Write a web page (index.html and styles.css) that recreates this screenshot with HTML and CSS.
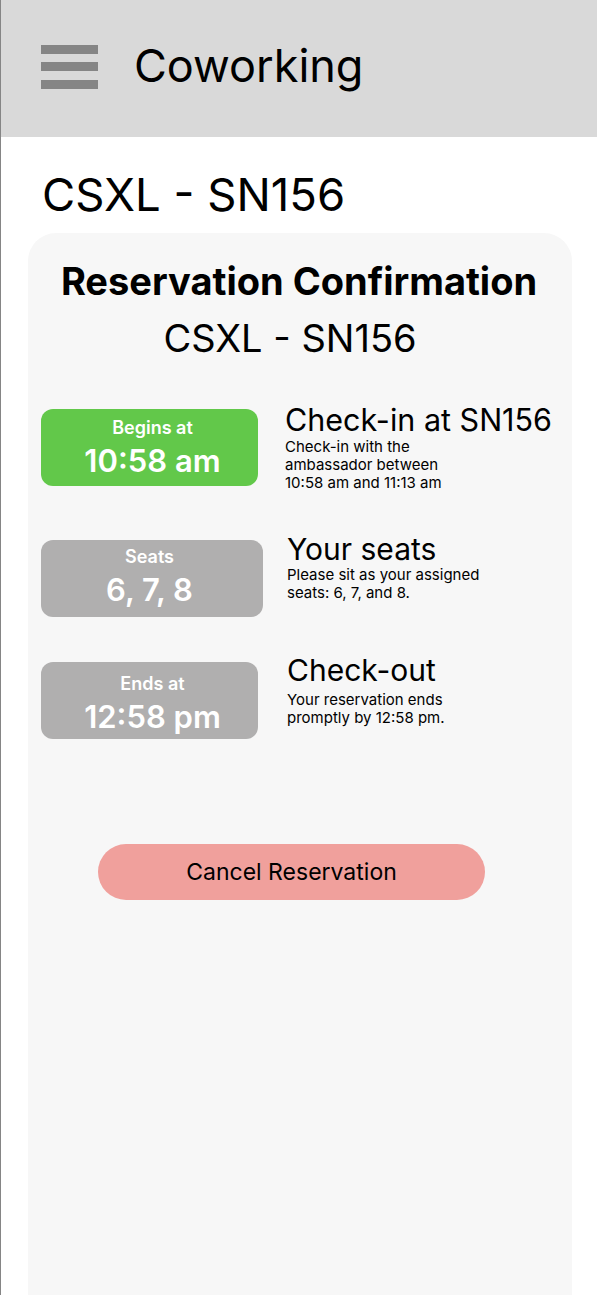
FILE: index.html
```html
<!DOCTYPE html>
<html lang="en">
<head>
<meta charset="utf-8">
<title>Coworking</title>
<link rel="stylesheet" href="styles.css">
</head>
<body>
<div class="app">
  <header class="topbar">
    <svg class="menu" width="57" height="44" viewBox="0 0 57 44" aria-hidden="true">
      <rect x="0" y="0" width="57" height="9" fill="#858585"/>
      <rect x="0" y="17" width="57" height="9" fill="#858585"/>
      <rect x="0" y="35" width="57" height="9" fill="#858585"/>
    </svg>
    <span class="brand">Coworking</span>
  </header>
  <main class="content">
    <h1 class="page-title">CSXL - SN156</h1>
    <section class="card">
      <h2 class="card-title">Reservation Confirmation</h2>
      <div class="card-sub">CSXL - SN156</div>
      <div class="rows">
        <div class="row row-start">
          <div class="badge badge-green">
            <span class="badge-label">Begins at</span>
            <span class="badge-value">10:58 am</span>
          </div>
          <div class="info">
            <div class="info-title">Check-in at SN156</div>
            <div class="info-text">Check-in with the<br>ambassador between<br>10:58 am and 11:13 am</div>
          </div>
        </div>
        <div class="row row-seats">
          <div class="badge badge-gray badge-wide">
            <span class="badge-label">Seats</span>
            <span class="badge-value">6, 7, 8</span>
          </div>
          <div class="info">
            <div class="info-title">Your seats</div>
            <div class="info-text">Please sit as your assigned<br>seats: 6, 7, and 8.</div>
          </div>
        </div>
        <div class="row row-end">
          <div class="badge badge-gray badge-end">
            <span class="badge-label">Ends at</span>
            <span class="badge-value">12:58 pm</span>
          </div>
          <div class="info">
            <div class="info-title">Check-out</div>
            <div class="info-text">Your reservation ends<br>promptly by 12:58 pm.</div>
          </div>
        </div>
      </div>
      <div class="actions">
        <button class="cancel" type="button">Cancel Reservation</button>
      </div>
    </section>
  </main>
</div>
</body>
</html>
```

FILE: styles.css
```css
html, body {
  margin: 0;
  padding: 0;
  background: #ffffff;
}

body {
  font-family: "Inter", "Liberation Sans", sans-serif;
  color: #000;
  overflow: hidden;
}

.app {
  border-left: 1px solid #858585;
  min-height: 1295px;
  box-sizing: border-box;
}

.topbar {
  height: 137px;
  background: #d9d9d9;
  display: flex;
  align-items: center;
  padding-left: 40px;
}

.menu {
  display: block;
  flex: none;
  margin-top: -3px;
}

.brand {
  margin-left: 36px;
  font-size: 45px;
  font-weight: 400;
  line-height: 1;
  margin-top: -6px;
}

.content {
  padding: 0 24px 0 27px;
}

.page-title {
  margin: 0;
  padding: 30px 0 0 14px;
  font-size: 45.5px;
  font-weight: 400;
  line-height: 56px;
  height: 66px;
}

.card {
  background: #f7f7f7;
  border-radius: 28px;
  width: 544px;
  min-height: 1100px;
  box-sizing: border-box;
  padding: 26px 0 0 0;
}

.card-title {
  margin: 0;
  text-align: center;
  font-family: "Inter", "Liberation Sans", sans-serif;
  font-weight: 700;
  font-size: 38px;
  line-height: 44px;
  padding-right: 2px;
}

.card-sub {
  text-align: center;
  font-family: "Inter", "Liberation Sans", sans-serif;
  font-size: 38px;
  line-height: 44px;
  margin-top: 13px;
  margin-left: -20px;
}

.rows {
  display: flex;
  flex-direction: column;
  margin-top: 49px;
  padding-left: 13px;
}

.row {
  display: flex;
  align-items: flex-start;
  height: 77px;
}

.row-seats {
  margin-top: 54px;
}

.row-end {
  margin-top: 45px;
}

.badge {
  width: 217px;
  height: 77px;
  border-radius: 12px;
  display: flex;
  flex-direction: column;
  align-items: center;
  justify-content: flex-start;
  color: #fff;
  flex: none;
  box-sizing: border-box;
  padding: 9px 0 0 6px;
}

.badge-wide {
  width: 222px;
  padding: 7px 5px 0 0;
}

.badge-end {
  padding-top: 12px;
}

.badge-green {
  background: #62c84a;
}

.badge-gray {
  background: #b0afaf;
}

.badge-label {
  font-size: 18px;
  font-weight: 600;
  line-height: 20px;
}

.badge-value {
  font-size: 31px;
  font-weight: 600;
  line-height: 38px;
  margin-top: 4px;
}

.info {
  margin-top: -7px;
}

.row-start .info {
  margin-left: 27px;
}

.row-seats .info {
  margin-left: 24px;
  margin-top: -9px;
}

.row-end .info {
  margin-left: 29px;
  margin-top: -10px;
}

.info-title {
  font-size: 30.5px;
  line-height: 36px;
  font-weight: 400;
}

.row-seats .info-title,
.row-end .info-title {
  font-size: 30px;
}

.row-seats .info-title {
  line-height: 34px;
  padding-top: 1px;
}

.info-text {
  font-size: 15px;
  line-height: 18px;
  font-weight: 400;
}

.row-end .info-text {
  margin-top: 3px;
}

.actions {
  display: flex;
  margin-top: 105px;
  padding-left: 70px;
}

.cancel {
  width: 387px;
  height: 56px;
  border: none;
  border-radius: 28px;
  background: #f0a09c;
  font-family: "Inter", "Liberation Sans", sans-serif;
  font-size: 23px;
  color: #000;
  padding: 0;
}
```
